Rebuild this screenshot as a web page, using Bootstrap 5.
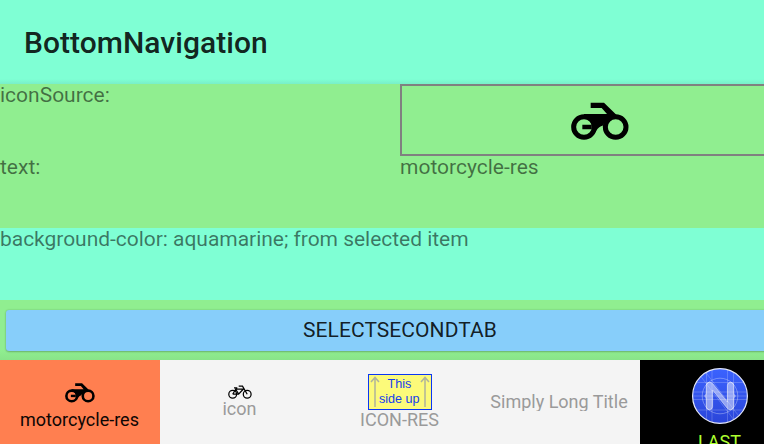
<!DOCTYPE html>
<html lang="en">
<head>
<meta charset="utf-8">
<meta name="viewport" content="width=device-width, initial-scale=1">
<title>BottomNavigation</title>
<link href="https://cdn.jsdelivr.net/npm/bootstrap@5.3.0/dist/css/bootstrap.min.css" rel="stylesheet">
<style>
  body { font-family: Roboto, sans-serif; font-size: 21px; line-height: 25px; color: rgba(0,0,0,.54); background: aquamarine; height: 444px; }
  .screen { width: 800px; height: 444px; overflow: hidden; }
  .action-bar { height: 84px; flex-shrink: 0; padding: 0 24px; background: linear-gradient(aquamarine 79px, #78efc9 84px); color: rgba(0,0,0,.87); }
  .action-title { font-size: 30px; font-weight: 500; line-height: 36px; margin-top: 2px; letter-spacing: .04px; }
  .content { height: 276px; flex-shrink: 0; background: lightgreen; }
  .cell { height: 72px; line-height: 22px; }
  .icon-box { border: 2px solid gray; }
  .icon-box svg { margin-left: -1px; margin-top: 3px; }
  .aqua { background: aquamarine; letter-spacing: -.03px; }
  .button-row { height: 60px; padding: 10px 6px 9px; background: linear-gradient(lightgreen 50px, #89e489 60px); }
  .select-btn { --bs-btn-bg: lightskyblue; --bs-btn-hover-bg: lightskyblue; --bs-btn-color: rgba(0,0,0,.87); font-size: 21px; line-height: 24px; border: 0; border-radius: 3px; padding: 0 0 2px; box-shadow: 0 0 2px rgba(0,0,0,.2), 0 1px 2px rgba(0,0,0,.2); letter-spacing: .06px; }
  .tabs { height: 84px; }
  .tab { width: 160px; font-size: 18px; line-height: 21px; color: #9a9a9a; background: #f4f4f4; }
  .tab-coral { background: coral; color: #0d0604; }
  .tab-last { background: #000; color: greenyellow; }
  .tab-label { margin: -1px 1px 0 0; }
  .clip-line { height: 20px; overflow: hidden; margin-right: 2px; }
</style>
<script src="https://cdn.jsdelivr.net/npm/bootstrap@5.3.0/dist/js/bootstrap.bundle.min.js"></script>
</head>
<body class="overflow-hidden">
<svg width="0" height="0" class="d-none">
  <symbol id="motorcycle" viewBox="64 37 174 116">
    <circle cx="103" cy="112" r="31" fill="none" stroke="#000" stroke-width="15"/>
    <circle cx="198" cy="112" r="31" fill="none" stroke="#000" stroke-width="15"/>
    <path d="M98 105H126V119H98Z"/>
    <path d="M123 39H163L200 75L172 98C163 99 160 105 159 108Q149 109 139 124L126 119V105Q123 88 103 87V73H172L156 55H123Z"/>
  </symbol>
</svg>
<div class="screen d-flex flex-column">
  <header class="action-bar d-flex align-items-center"><h1 class="action-title mb-0">BottomNavigation</h1></header>
  <main class="content">
    <div class="row g-0">
      <div class="col-6 cell">iconSource:</div>
      <div class="col-6 cell icon-box d-flex align-items-center justify-content-center"><svg width="58" height="38.7"><use href="#motorcycle"/></svg></div>
      <div class="col-6 cell">text:</div>
      <div class="col-6 cell">motorcycle-res</div>
      <div class="col-12 cell aqua">background-color: aquamarine; from selected item</div>
    </div>
    <div class="button-row d-flex"><button type="button" class="btn select-btn w-100">SELECTSECONDTAB</button></div>
  </main>
  <nav class="tabs d-flex text-center">
    <div class="tab tab-coral d-flex flex-column align-items-center" style="padding-top:23px">
      <svg width="30" height="20"><use href="#motorcycle"/></svg><span class="mt-1 pt-1 pe-1" style="line-height:18px;margin-right:-3px">motorcycle-res</span>
    </div>
    <div class="tab d-flex flex-column align-items-center" style="padding-top:25px">
      <svg width="24" height="14" viewBox="0 0 24 14" fill="none" stroke="#000" stroke-width="1.25">
        <circle cx="4.7" cy="9.2" r="3.9"/><circle cx="19.2" cy="9.2" r="3.9"/>
        <path d="M4.7 9.2L7.8 4H15.4L10.6 9.2H4.7M7.5 4L10.7 9.2M6 2.8H9.3M19.2 9.2L14.5 1.2H10.7"/>
      </svg><span class="tab-label">icon</span>
    </div>
    <div class="tab d-flex flex-column align-items-center" style="padding-top:14px">
      <svg width="64" height="36" viewBox="0 0 64 36">
        <rect x=".5" y=".5" width="63" height="35" fill="#fcfa7a" stroke="#0a36f5"/>
        <path d="M7 33V4M3 8L7 3.5L11 8M57 33V4M53 8L57 3.5L61 8" fill="none" stroke="#afb39c" stroke-width="1.5"/>
        <g fill="#1540ee" font-family="Liberation Sans, Arial, sans-serif" font-size="12.6" text-anchor="middle"><text x="31.5" y="14">This</text><text x="31.3" y="29.4">side up</text></g>
      </svg><span class="tab-label">ICON-RES</span>
    </div>
    <div class="tab" style="padding-top:31px"><div class="clip-line">Simply Long Title</div></div>
    <div class="tab tab-last d-flex flex-column align-items-center" style="padding-top:8px">
      <svg class="flex-shrink-0" width="56" height="56" viewBox="0 0 56 56">
        <defs><linearGradient id="logo-fill" x2="0" y2="1"><stop stop-color="#3b63ff"/><stop offset="1" stop-color="#2a45d9"/></linearGradient>
        <clipPath id="logo-clip"><circle cx="28" cy="28" r="27"/></clipPath></defs>
        <circle cx="28" cy="28" r="27.4" fill="url(#logo-fill)" stroke="#e3e7fb" stroke-width="1.2"/>
        <g clip-path="url(#logo-clip)" fill="none" stroke="#fff" stroke-opacity=".25" stroke-width=".8">
          <path d="M14.5 0V56M20 0V56M35.5 0V56M41.5 0V56M0 14.5H56M0 24H56M0 28H56M0 31.5H56M0 42H56M7 6L45 56M12 2L52 55"/>
          <circle cx="28" cy="28" r="17.8" stroke-opacity=".4"/>
        </g>
        <path d="M14.2 39V31Q14.2 28.5 12.5 28Q14.2 27.5 14.2 25V17.5Q14.2 14.3 17.4 14.3Q19.5 14.3 21 16L35.4 34V17.5Q35.4 14.3 38.5 14.3Q41.8 14.3 41.8 17.5V25Q41.8 27.5 43.5 28Q41.8 28.5 41.8 31V38.5Q41.8 41.7 38.5 41.7Q36.4 41.7 35 40L20.6 22V38.5Q20.6 41.7 17.4 41.7Q14.2 41.7 14.2 39Z" fill="#fff" fill-opacity=".48" stroke="#fff" stroke-opacity=".6" stroke-width=".8"/>
      </svg><span class="tab-label flex-shrink-0" style="padding-top:8px">LAST</span>
    </div>
  </nav>
</div>
</body>
</html>
